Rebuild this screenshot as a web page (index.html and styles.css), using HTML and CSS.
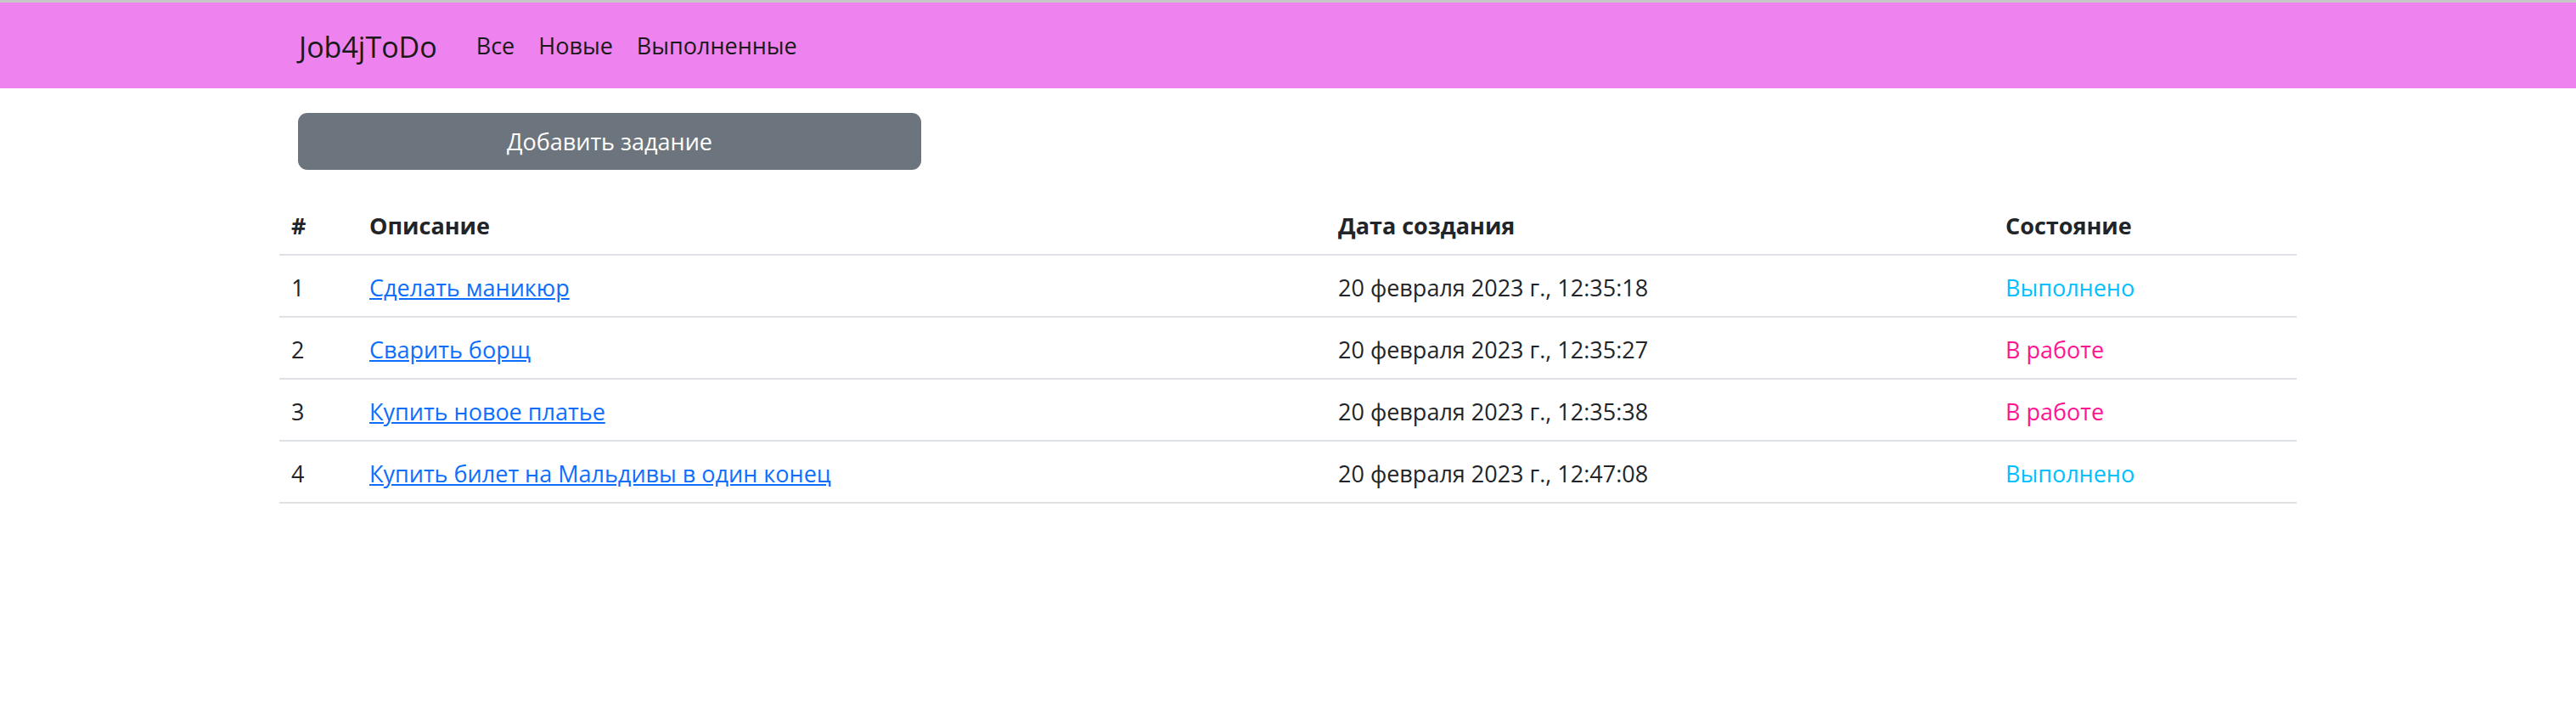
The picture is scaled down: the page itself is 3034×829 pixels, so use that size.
FILE: index.html
```html
<!DOCTYPE html>
<html lang="ru">
<head>
<meta charset="utf-8">
<title>Job4jToDo</title>
<link rel="stylesheet" href="styles.css">
</head>
<body>
<div class="topline"></div>
<nav class="navbar">
  <div class="nav-inner">
    <a class="brand" href="#">Job4jToDo</a>
    <ul class="nav-links">
      <li><a href="#">Все</a></li>
      <li><a href="#">Новые</a></li>
      <li><a href="#">Выполненные</a></li>
    </ul>
  </div>
</nav>
<main class="container">
  <div class="toolbar">
    <a class="btn" href="#">Добавить задание</a>
  </div>
  <table class="tasks">
    <colgroup>
      <col class="c-num">
      <col class="c-desc">
      <col class="c-date">
      <col class="c-state">
    </colgroup>
    <thead>
      <tr><th>#</th><th>Описание</th><th>Дата создания</th><th>Состояние</th></tr>
    </thead>
    <tbody>
      <tr><td>1</td><td><a href="#">Сделать маникюр</a></td><td>20 февраля 2023 г., 12:35:18</td><td class="done">Выполнено</td></tr>
      <tr><td>2</td><td><a href="#">Сварить борщ</a></td><td>20 февраля 2023 г., 12:35:27</td><td class="work">В работе</td></tr>
      <tr><td>3</td><td><a href="#">Купить новое платье</a></td><td>20 февраля 2023 г., 12:35:38</td><td class="work">В работе</td></tr>
      <tr><td>4</td><td><a href="#">Купить билет на Мальдивы в один конец</a></td><td>20 февраля 2023 г., 12:47:08</td><td class="done">Выполнено</td></tr>
    </tbody>
  </table>
</main>
</body>
</html>
```

FILE: styles.css
```css
html, body {
  margin: 0;
  padding: 0;
  background: #fff;
}
body {
  font-family: "Open Sans", "Noto Sans", sans-serif;
  font-size: 27px;
  line-height: 1.5;
  color: #212529;
}
.topline {
  height: 3px;
  background: #c6c6c6;
}
.navbar {
  background: #ee82ee;
  padding: 14px 0;
  height: 101px;
  box-sizing: border-box;
}
.nav-inner {
  width: 2376px;
  margin: 0 auto;
  padding: 0 22px 0 23px;
  box-sizing: border-box;
  display: flex;
  align-items: center;
}
.brand {
  font-size: 34px;
  line-height: 54px;
  padding: 11px 0 7px;
  margin-right: 32px;
  color: #1a1a1a;
  text-decoration: none;
}
.nav-links {
  list-style: none;
  margin: 0;
  padding: 3px 0 0;
  display: flex;
}
.nav-links a {
  display: block;
  padding: 0 14px;
  color: #1a1a1a;
  text-decoration: none;
}
.container {
  width: 2376px;
  margin: 0 auto;
}
.toolbar {
  padding: 29px 22px 0;
}
.btn {
  display: flex;
  align-items: center;
  justify-content: center;
  width: 734px;
  height: 67px;
  padding-top: 2px;
  box-sizing: border-box;
  background: #6c757d;
  color: #fff;
  border-radius: 11px;
  text-decoration: none;
}
.tasks {
  width: 100%;
  margin-top: 28px;
  border-collapse: collapse;
  table-layout: fixed;
}
.c-num { width: 92px; }
.c-desc { width: 1141px; }
.c-date { width: 786px; }
.c-state { width: 357px; }
.tasks th, .tasks td {
  text-align: left;
  padding: 16px 14px 12px;
  line-height: 43px;
  border-bottom: 2px solid #dee2e6;
}
.tasks th {
  font-weight: 700;
}
.tasks a {
  color: #0d6efd;
  text-decoration: underline;
}
.done { color: #00bfff; }
.work { color: #ff1493; }
```
